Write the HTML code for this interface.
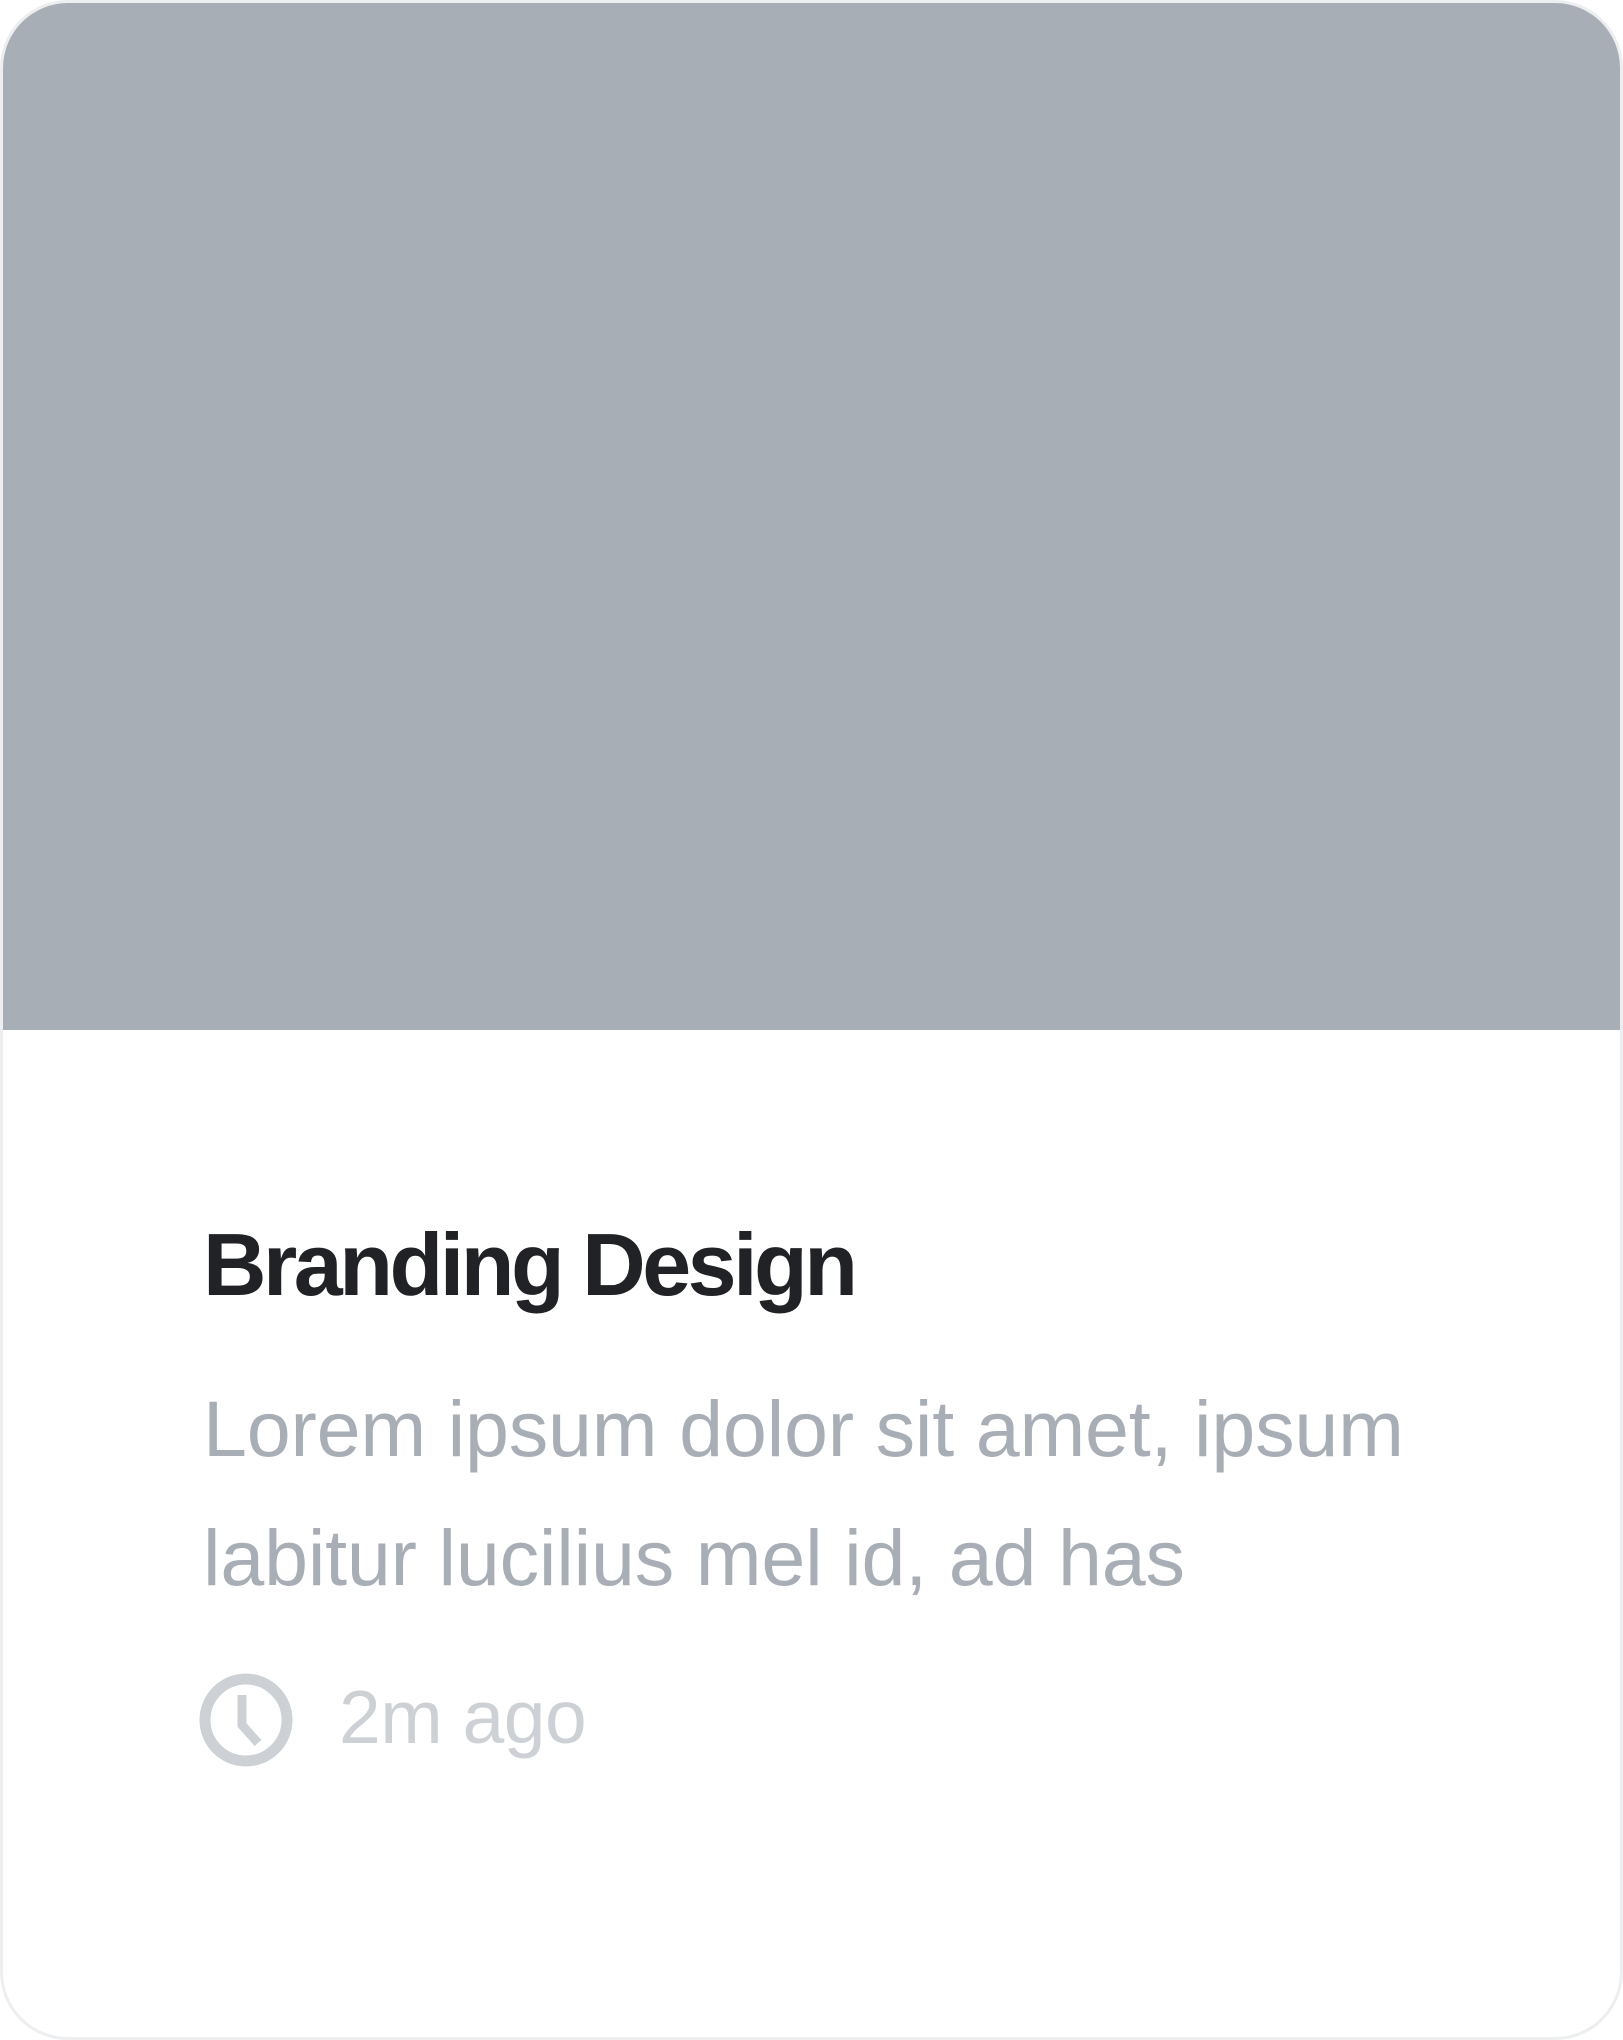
<!DOCTYPE html>
<html><head><style>
html,body{margin:0;padding:0;background:#fff;width:1623px;height:2040px;overflow:hidden}
.card{position:absolute;left:0;top:0;width:1617px;height:2034px;border:3px solid #eceef0;border-radius:68px;overflow:hidden;background:#fff}
.img{position:absolute;left:-3px;top:-3px;width:1623px;height:1030px;background:#a7aeb5}
.t{position:absolute;left:203px;top:1221px;font-family:"Liberation Sans",sans-serif;font-weight:bold;font-size:88px;letter-spacing:-3.5px;color:#212226;white-space:nowrap;line-height:1}
.b{position:absolute;left:203px;font-family:"Liberation Sans",sans-serif;font-size:79px;letter-spacing:-0.2px;color:#a7aeb5;white-space:nowrap;line-height:1}
.m{position:absolute;left:339px;top:1680px;font-family:"Liberation Sans",sans-serif;font-size:75px;color:#cdd1d5;white-space:nowrap;line-height:1;letter-spacing:-0.5px}
</style></head><body>
<div class="card"><div class="img"></div></div>
<div class="t">Branding Design</div>
<div class="b" style="top:1389px">Lorem ipsum dolor sit amet, ipsum</div>
<div class="b" style="top:1518px">labitur lucilius mel id, ad has</div>
<svg style="position:absolute;left:199px;top:1673px" width="94" height="94" viewBox="0 0 94 94">
<circle cx="47" cy="47" r="41" fill="none" stroke="#cdd1d5" stroke-width="11"/>
<path d="M43 22 V52 L59 70" fill="none" stroke="#cdd1d5" stroke-width="9"/>
</svg>
<div class="m">2m ago</div>
</body></html>
